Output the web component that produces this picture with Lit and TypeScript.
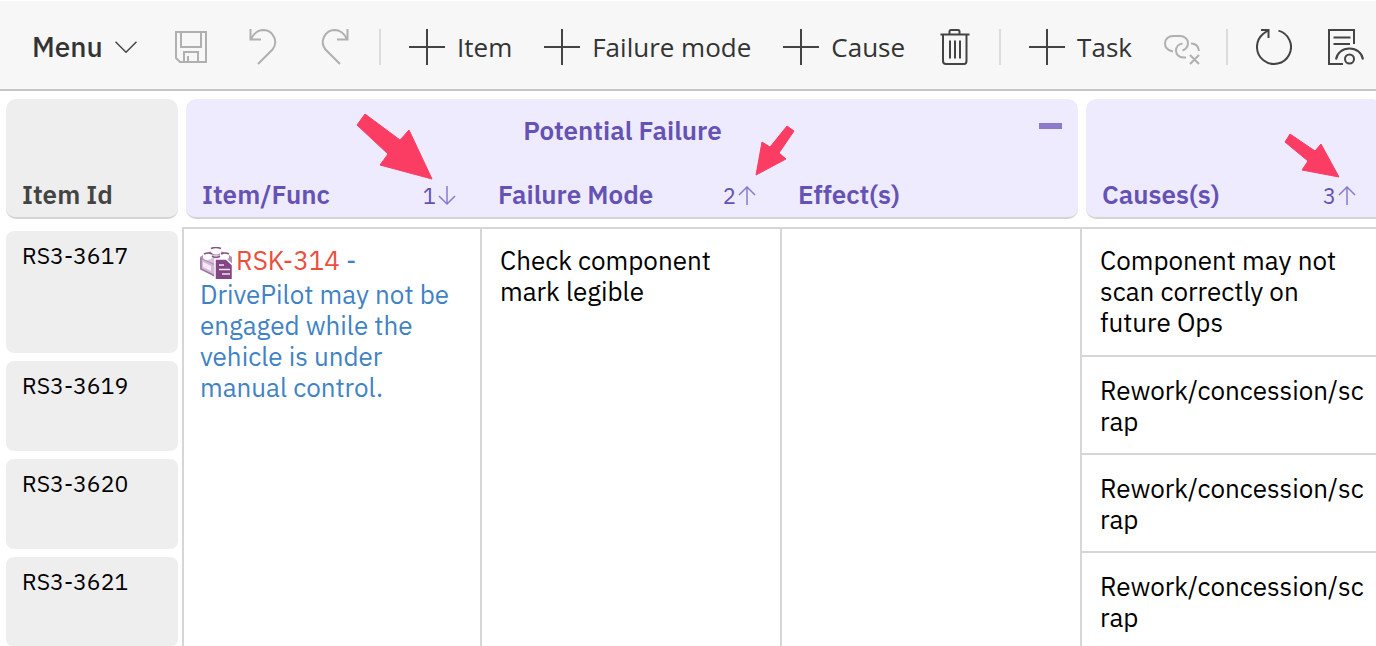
import { LitElement, html, css, svg, nothing } from "lit";
import { customElement } from "lit/decorators.js";

const plus = html`<svg class="icon" viewBox="0 0 36 36" aria-hidden="true">
  <path class="plus" d="M18 0v36M0 18h36" />
</svg>`;

const sortArrow = (up: boolean) => html`<svg class="arrow" viewBox="0 0 18 19" aria-hidden="true">
  ${up ? svg`<path d="M9 19V1M1 9l8-8 8 8" />` : svg`<path d="M9 0v18M1 10l8 8 8-8" />`}
</svg>`;

const columns = [
  { name: "Item/Func", order: 1, up: false, edge: "first" },
  { name: "Failure Mode", order: 2, up: true, edge: "" },
  { name: "Effect(s)", order: 0, up: true, edge: "last" },
  { name: "Causes(s)", order: 3, up: true, edge: "first" },
];

const rows = [
  { id: "RS3-3617", cause: "Component may not scan correctly on future Ops" },
  { id: "RS3-3619", cause: "Rework/concession/scrap" },
  { id: "RS3-3620", cause: "Rework/concession/scrap" },
  { id: "RS3-3621", cause: "Rework/concession/scrap" },
];

@customElement("risk-toolbar")
class RiskToolbar extends LitElement {
  static styles = css`
    :host { display: block; }
    .bar {
      box-sizing: border-box;
      display: flex;
      align-items: center;
      height: 91px;
      padding: 4px 0 0 32px;
      overflow: hidden;
      background: #f7f7f7;
      border-top: 1px solid #fff;
      border-bottom: 2px solid #c4c4c4;
    }
    button {
      display: flex;
      align-items: center;
      flex: none;
      gap: 12px;
      margin: 0;
      padding: 0;
      border: 0;
      background: none;
      color: #333;
      font: 400 26px/36px "Segoe UI", "Open Sans", sans-serif;
      white-space: nowrap;
    }
    .menu { width: 104px; font: 500 28px/36px "IBM Plex Sans", Roboto, sans-serif; }
    .group { display: flex; flex: none; align-items: center; }
    .spaced { gap: 36px; }
    .history { margin-left: 37px; }
    .actions { gap: 32px; }
    svg { display: block; flex: none; fill: none; stroke: #444; stroke-width: 2; }
    .icon { width: 36px; height: 36px; }
    .chevron { width: 22px; height: 12px; stroke-width: 1.5; }
    .muted svg { stroke: #b0b0b0; }
    .sep { flex: none; width: 2px; height: 36px; margin: 0 28px 0 26px; background: #dcdcdc; }
  `;
  render() {
    return html`<nav class="bar" aria-label="Toolbar">
      <button class="menu">Menu
        <svg class="chevron" viewBox="0 0 22 12" aria-hidden="true"><path d="M.5.7 11 11.2 21.500.7" /></svg>
      </button>
      <div class="group spaced history">
        <button class="muted" aria-label="Save" disabled>
          <svg class="icon" viewBox="0 0 36 36"><path d="M3 3h30v30H7l-4-4zM8 3v15h20V3M11 33V23h14v10M15 27v6" /></svg>
        </button>
        <button class="muted" aria-label="Undo" disabled>
          <svg class="icon" viewBox="0 0 36 36"><path d="M5.500 0v10.500H16M6 10C9 4 13.500 1 18.500 1a12 12 0 0 1 9 19.500L13 35" /></svg>
        </button>
        <button class="muted" aria-label="Redo" disabled>
          <svg class="icon" viewBox="0 0 36 36"><path d="M30.500 0v10.500H20M30 10C27 4 22.500 1 17.500 1a12 12 0 0 0-9 19.500L23 35" /></svg>
        </button>
      </div>
      <span class="sep"></span>
      <div class="group actions">
        <button>${plus}Item</button>
        <button>${plus}Failure mode</button>
        <button>${plus}Cause</button>
        <button aria-label="Delete">
          <svg class="icon" viewBox="0 0 36 36"><path d="M3.500 5.500h29M12.500 5V2.500q0-1.500 1.500-1.500h7q1.500 0 1.500 1.500V5M6 6v26q0 3 3 3h18q2.500 0 2.500-3V6M13 11.500v18M18 11.500v18M23 11.500v18" /></svg>
        </button>
      </div>
      <span class="sep"></span>
      <div class="group actions">
        <button>${plus}Task</button>
        <button class="muted" aria-label="Unlink" disabled>
          <svg class="icon" viewBox="0 0 36 36"><path d="M9 22.500C4 21.500 1 18.500 1 14.500 1 10 4.500 7 9 7h7c4.500 0 8 3 8 7 0 3.500-2 6-5.500 7.500M22 28.500h-2.500c-4.500 0-7.500-3-7.500-7 0-3.500 2.500-6.500 6.500-7M27 14.500c4.500 0 7.500 3 8 7.500M26 26l9 9M35 26l-9 9" /></svg>
        </button>
      </div>
      <span class="sep"></span>
      <div class="group spaced">
        <button aria-label="Refresh">
          <svg class="icon" viewBox="0 0 36 36"><path d="M5 1h7.500v8M22.500 1.600A17 17 0 1 1 7 5L12.500 1" /></svg>
        </button>
        <button aria-label="Preview">
          <svg class="icon" viewBox="0 0 36 36"><path d="M15 35H1V1h25v14M5.500 8.500h17M5.500 15H22M8 30.500C9 24 14.500 19.500 21.500 19.500S34 24 35 30.500" /><circle cx="21.500" cy="30" r="4.500" /></svg>
        </button>
      </div>
    </nav>`;
  }
}

@customElement("risk-grid")
class RiskGrid extends LitElement {
  static styles = css`
    :host { display: block; position: relative; overflow: hidden; padding-top: 8px; }
    table {
      width: calc(100% + 6px);
      border-spacing: 0;
      table-layout: fixed;
      color: #000;
      font: 400 26px/31px "IBM Plex Sans", Roboto, sans-serif;
      text-align: left;
    }
    .col-id { width: 182px; }
    .col { width: 300px; }
    th, td { padding: 0; vertical-align: top; }
    thead { color: #6552b5; }
    thead th { font-weight: 600; }
    .top, .bottom { box-sizing: border-box; height: 60px; background: #efebfe; }
    .top {
      display: flex;
      align-items: center;
      margin-left: 4px;
      padding: 2px 16px 0 20px;
      border-radius: 10px 10px 0 0;
    }
    .bottom {
      display: flex;
      align-items: center;
      padding: 12px 26px 0 16px;
      border-bottom: 2px solid #d4d4d4;
    }
    .ends { margin-right: 4px; }
    .first { margin-left: 4px; border-bottom-left-radius: 10px; }
    .last { margin-right: 4px; border-bottom-right-radius: 10px; }
    .grey { margin-left: 6px; background: #eee; color: #444; }
    .title { flex: 1; text-align: center; }
    .name { flex: 1; }
    .collapse { width: 23px; height: 14px; padding: 0 0 8px; border: 0; background: none; }
    .dash { display: block; height: 6px; background: #8c7bcb; }
    .sort {
      display: flex;
      align-items: center;
      gap: 2px;
      padding: 2px 0 0;
      border: 0;
      background: none;
      color: inherit;
      font: 400 22px/31px "IBM Plex Sans", Roboto, sans-serif;
    }
    .arrow { width: 18px; height: 19px; fill: none; stroke: #8a7bd0; stroke-width: 1.5; }
    tbody::before { content: ""; display: table-row; height: 8px; }
    tbody td {
      box-sizing: border-box;
      height: 98px;
      padding: 18px 16px 16px 18px;
      border-right: 2px solid #d6d6d6;
      border-bottom: 2px solid #d6d6d6;
      overflow-wrap: anywhere;
    }
    .lead td { height: 130px; box-shadow: inset 0 2px #d6d6d6; }
    tbody td.item { padding-left: 16px; border-left: 2px solid #d6d6d6; }
    tbody th { height: 1px; padding: 4px 4px 4px 6px; font-weight: 400; font-size: 23px; }
    .id { box-sizing: border-box; height: 90px; padding: 9px 16px; border-radius: 8px; background: #eee; }
    .lead .id { height: 122px; }
    a { color: #3f83c5; text-decoration: none; }
    .key { color: #ea4f3d; }
    .brick { width: 32px; height: 32px; margin-right: 4px; vertical-align: -9px; }
    .marks { position: absolute; top: 0; left: 0; width: 1376px; height: 140px; fill: #fc3d63; stroke: #fc3d63; stroke-linejoin: round; pointer-events: none; }
  `;
  render() {
    return html`<table>
        <colgroup><col class="col-id" /><col class="col" /><col class="col" /><col class="col" /><col /></colgroup>
        <thead>
          <tr>
            <td><div class="top ends grey"></div></td>
            <th colspan="3" scope="colgroup">
              <div class="top ends"><span class="title">Potential Failure</span>
                <button class="collapse" aria-label="Collapse Potential Failure"><span class="dash"></span></button>
              </div>
            </th>
            <td><div class="top"></div></td>
          </tr>
          <tr>
            <th scope="col"><div class="bottom first last grey">Item Id</div></th>
            ${columns.map((c) => html`<th scope="col"><div class="bottom ${c.edge}">
              <span class="name">${c.name}</span>
              ${c.order ? html`<button class="sort" aria-label="Sort order ${c.order}">${c.order}${sortArrow(c.up)}</button>` : nothing}
            </div></th>`)}
          </tr>
        </thead>
        <tbody>
          ${rows.map((r, i) => html`<tr class=${i ? "" : "lead"}>
            <th scope="row"><div class="id">${r.id}</div></th>
            ${i ? nothing : html`
              <td class="item" rowspan=${rows.length}><a href="#"><svg class="brick" viewBox="0 0 32 32" aria-hidden="true">
                <path fill="#b48fb7" d="M0 10 3 8l8-4h10l8 4 3 2v11l-18 8L0 22z" />
                <path fill="#d9c3dc" d="m3 12 9-4h9l8 4-14 5z" />
                <path fill="#d3bad6" d="m1 12 13 6v11L1 22z" />
                <path fill="#f4ecf5" d="m3 15 8 4v5l-8-4z" />
                <path fill="none" stroke="#a077a4" stroke-width="1.500" d="M1 11v11l14 7" />
                <path fill="#fff" d="M10.500 1h11v4q-5.500 5-11 0zM3 6h9v5q-4.500 4-9 0zM20 6h9v5q-4.500 4-9 0z" />
                <path fill="none" stroke="#84508a" stroke-width="1.500" d="M11 1.500Q16-.5 21 1.500M4 7q4-2 8 0M21 7q4-2 8 0M12 9q4 3 8 0" />
                <path fill="#824683" stroke="#fff" stroke-width="1.500" d="M15 12h11l6.500 6v15H15z" />
                <path fill="none" stroke="#f0e4f0" stroke-width="1.500" d="M19 18h5M19 22.500h11M22 27h8" />
              </svg><span class="key">RSK-314</span> -<br />DrivePilot may not be engaged while the vehicle is under manual control.</a></td>
              <td rowspan=${rows.length}>Check component mark legible</td>
              <td rowspan=${rows.length}></td>`}
            <td>${r.cause}</td>
          </tr>`)}
        </tbody>
      </table>
      <svg class="marks" viewBox="0 91 1376 140" aria-hidden="true">
        <path d="m365 114 35 26 9-10 23 49-52-14 8-11-31-29z" />
        <path d="m787 126 7 5-15 22 7 6-30 16 6-33 8 5z" />
        <path d="m1290 134 25 17 6-7 18 33-37-7 6-9-23-19z" />
      </svg>`;
  }
}

@customElement("app-root")
class AppRoot extends LitElement {
  static styles = css`
    :host { display: block; height: 100vh; overflow: hidden; background: #fff; }
  `;
  render() {
    return html`<risk-toolbar></risk-toolbar><risk-grid></risk-grid>`;
  }
}
